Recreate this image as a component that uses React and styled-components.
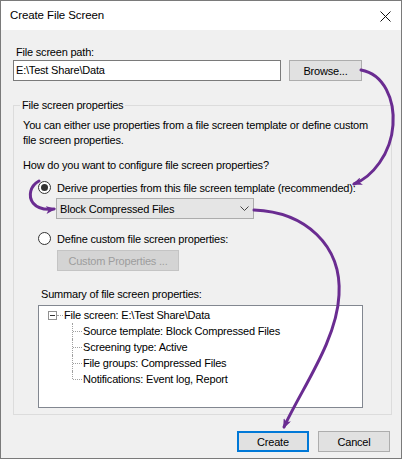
import React from "react";
import styled, { createGlobalStyle } from "styled-components";

// ============ Styled Components ============
const GlobalStyle = createGlobalStyle`
  html, body {
    margin: 0;
    padding: 0;
    background: #ffffff;
  }
  * {
    box-sizing: border-box;
  }
`;

const Window = styled.div`
  position: relative;
  width: 402px;
  height: 459px;
  border: 1px solid #7a7a7a;
  background: #f0f0f0;
  font-family: "Liberation Sans", Arial, sans-serif;
  font-size: 11px;
  letter-spacing: -0.2px;
  color: #000;
  overflow: hidden;
`;

const TitleBar = styled.div`
  display: flex;
  align-items: center;
  justify-content: space-between;
  height: 29px;
  padding: 0 10px 0 9px;
  background: #ffffff;
`;

const Title = styled.span`
  font-size: 11.5px;
  letter-spacing: -0.1px;
  line-height: 15px;
`;

const CloseIcon = styled.svg`
  display: block;
  margin-top: 1px;
`;

const Body = styled.div`
  padding: 0 9px 0 12px;
`;

const Label = styled.div`
  line-height: 15px;
  margin: ${(p) => p.$margin || "0"};
`;

const PathRow = styled.div`
  display: flex;
  align-items: center;
  gap: 8px;
`;

const TextBox = styled.div`
  width: 268px;
  height: 21px;
  padding: 0 2px;
  border: 1px solid #7a7a7a;
  background: #ffffff;
  line-height: 19px;
  white-space: nowrap;
`;

const Button = styled.div`
  display: flex;
  align-items: center;
  justify-content: center;
  width: ${(p) => p.$width || "72px"};
  height: 21px;
  margin: ${(p) => p.$margin || "0"};
  background: ${(p) => (p.$disabled ? "#d4d4d4" : "#e1e1e1")};
  border: ${(p) =>
    p.$primary
      ? "2px solid #0078d7"
      : p.$disabled
      ? "1px solid #c4c4c4"
      : "1px solid #adadad"};
  color: ${(p) => (p.$disabled ? "#9d9d9d" : "#000")};
  white-space: nowrap;
`;

const Group = styled.fieldset`
  margin: 17px 0 0;
  padding: 0 8px 6px 9px;
  border: 1px solid #dcdcdc;
  min-width: 0;

  legend {
    margin-left: -3px;
    padding: 0 2px;
    line-height: 15px;
  }
`;

const Text = styled.div`
  line-height: 15px;
  white-space: nowrap;
  margin: ${(p) => p.$margin || "0"};
`;

const RadioRow = styled.div`
  display: flex;
  align-items: center;
  gap: 6px;
  height: 15px;
  white-space: nowrap;
  margin: ${(p) => p.$margin || "0"};
`;

const Radio = styled.span`
  display: flex;
  flex: none;
  align-items: center;
  justify-content: center;
  width: 13px;
  height: 13px;
  border: 1px solid #333333;
  border-radius: 50%;
  background: #ffffff;

  &::after {
    content: "";
    width: 7px;
    height: 7px;
    border-radius: 50%;
    background: ${(p) => (p.$checked ? "#333333" : "transparent")};
  }
`;

const Select = styled.div`
  display: flex;
  align-items: center;
  justify-content: space-between;
  width: 198px;
  height: 21px;
  margin: 3px 0 0 33px;
  padding: 0 4px 0 3px;
  background: #e5e5e5;
  border: 1px solid #acacac;
`;

const Tree = styled.div`
  width: 325px;
  height: 103px;
  margin: 3px 0 0 15px;
  padding: 1px 0 0 9px;
  border: 1px solid #828790;
  background: #ffffff;
`;

const TreeRow = styled.div`
  display: flex;
  align-items: center;
  height: 16px;
  white-space: nowrap;
`;

const Expander = styled.span`
  position: relative;
  flex: none;
  width: 9px;
  height: 9px;
  border: 1px solid #919191;
  margin-right: 7px;

  &::before {
    content: "";
    position: absolute;
    left: 1px;
    right: 1px;
    top: 3px;
    height: 1px;
    background: #333;
  }

  &::after {
    content: "";
    position: absolute;
    left: 8px;
    top: 3px;
    width: 6px;
    border-top: 1px dotted #a0a0a0;
  }
`;

const TreeChildren = styled.div`
  margin-left: 24px;
`;

const TreeChild = styled.div`
  position: relative;
  display: flex;
  align-items: center;
  height: 16px;
  padding-left: 11px;
  white-space: nowrap;

  &::before {
    content: "";
    position: absolute;
    left: 0;
    top: 0;
    height: ${(p) => (p.$last ? "8px" : "16px")};
    border-left: 1px dotted #a0a0a0;
  }

  &::after {
    content: "";
    position: absolute;
    left: 1px;
    top: 8px;
    width: 9px;
    border-top: 1px dotted #a0a0a0;
  }
`;

const Footer = styled.div`
  display: flex;
  justify-content: flex-end;
  gap: 9px;
  margin: 16px 2px 0 0;
`;

const ArrowLayer = styled.svg`
  position: absolute;
  left: -1px;
  top: -1px;
  pointer-events: none;
`;
// ============ Styled Components (end) ============

const summary = [
  "Source template: Block Compressed Files",
  "Screening type: Active",
  "File groups: Compressed Files",
  "Notifications: Event log, Report",
];

const Arrows = () => (
  <ArrowLayer width="402" height="459" viewBox="0 0 402 459">
    <defs>
      <marker
        id="head"
        markerWidth="10"
        markerHeight="8"
        refX="8"
        refY="4"
        orient="auto"
        markerUnits="userSpaceOnUse"
      >
        <path d="M0,0 L10,4 L0,8 L2.5,4 z" fill="#6a2c91" />
      </marker>
    </defs>
    <g fill="none" stroke="#6a2c91" strokeWidth="3" strokeLinecap="round">
      <path
        d="M361,70 C384,74 395,100 393,125 C391,154 372,177 354,184"
        markerEnd="url(#head)"
      />
      <path
        d="M39,181 C30,186 28,196 33,203 C38,209 46,210 54,209"
        markerEnd="url(#head)"
      />
      <path
        d="M254,210 C305,212 342,245 339,295 C337,340 302,388 284,427"
        markerEnd="url(#head)"
      />
    </g>
  </ArrowLayer>
);

const App = () => {
  return (
    <>
      <GlobalStyle />
      <Window>
        <TitleBar>
          <Title>Create File Screen</Title>
          <CloseIcon width="11" height="11" viewBox="0 0 11 11">
            <path d="M0.5,0.5 L10.5,10.5 M10.5,0.5 L0.5,10.5" stroke="#111" strokeWidth="1" />
          </CloseIcon>
        </TitleBar>

        <Body>
          <Label $margin="15px 0 0 3px">File screen path:</Label>
          <PathRow>
            <TextBox>E:\Test Share\Data</TextBox>
            <Button $width="73px">Browse...</Button>
          </PathRow>

          <Group>
            <legend>File screen properties</legend>
            <Text $margin="5px 0 0">
              You can either use properties from a file screen template or define custom
              <br />
              file screen properties.
            </Text>
            <Text $margin="10px 0 0">How do you want to configure file screen properties?</Text>

            <RadioRow $margin="7px 0 0 15px">
              <Radio $checked />
              Derive properties from this file screen template (recommended):
            </RadioRow>
            <Select>
              <span>Block Compressed Files</span>
              <svg width="9" height="5" viewBox="0 0 9 5">
                <path d="M0.5,0.5 L4.5,4.5 L8.5,0.5" fill="none" stroke="#444" strokeWidth="1" />
              </svg>
            </Select>

            <RadioRow $margin="12px 0 0 15px">
              <Radio />
              Define custom file screen properties:
            </RadioRow>
            <Button $disabled $width="122px" $margin="4px 0 0 34px">
              Custom Properties ...
            </Button>

            <Label $margin="16px 0 0 18px">Summary of file screen properties:</Label>
            <Tree>
              <TreeRow>
                <Expander />
                File screen: E:\Test Share\Data
              </TreeRow>
              <TreeChildren>
                {summary.map((item, index) => (
                  <TreeChild key={item} $last={index === summary.length - 1}>
                    {item}
                  </TreeChild>
                ))}
              </TreeChildren>
            </Tree>
          </Group>

          <Footer>
            <Button $primary>Create</Button>
            <Button>Cancel</Button>
          </Footer>
        </Body>

        <Arrows />
      </Window>
    </>
  );
};

export default App;
